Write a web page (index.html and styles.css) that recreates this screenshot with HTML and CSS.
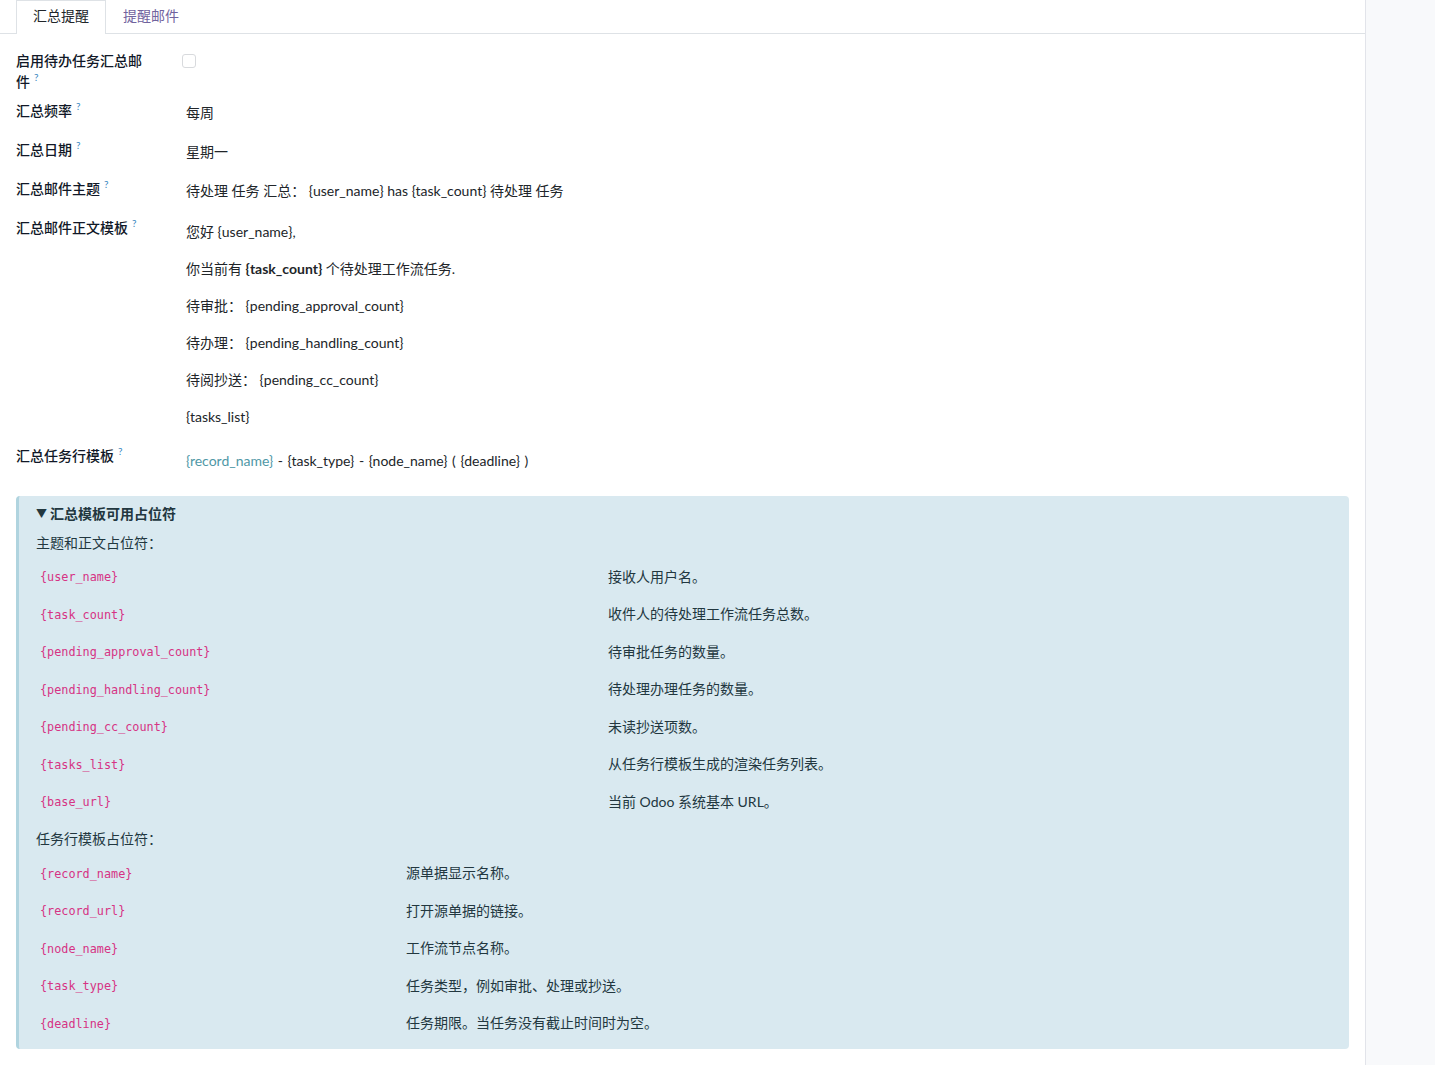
FILE: index.html
```html
<!DOCTYPE html>
<html lang="zh">
<head>
<meta charset="utf-8">
<title>汇总提醒</title>
<link rel="stylesheet" href="styles.css">
</head>
<body>
<div class="app">
  <div class="main">
    <ul class="tabs">
      <li class="tab active">汇总提醒</li>
      <li class="tab">提醒邮件</li>
    </ul>
    <div class="form">
      <div class="row row-first">
        <div class="label">启用待办任务汇总邮件<sup>?</sup></div>
        <div class="value"><span class="checkbox"></span></div>
      </div>
      <div class="row">
        <div class="label">汇总频率<sup>?</sup></div>
        <div class="value">每周</div>
      </div>
      <div class="row">
        <div class="label">汇总日期<sup>?</sup></div>
        <div class="value">星期一</div>
      </div>
      <div class="row">
        <div class="label">汇总邮件主题<sup>?</sup></div>
        <div class="value">待处理 任务 汇总： {user_name} has {task_count} 待处理 任务</div>
      </div>
      <div class="row row-body">
        <div class="label">汇总邮件正文模板<sup>?</sup></div>
        <div class="value body">
          <p>您好 {user_name},</p>
          <p>你当前有 <b>{task_count}</b> 个待处理工作流任务.</p>
          <p>待审批： {pending_approval_count}</p>
          <p>待办理： {pending_handling_count}</p>
          <p>待阅抄送： {pending_cc_count}</p>
          <p>{tasks_list}</p>
        </div>
      </div>
      <div class="row row-line">
        <div class="label">汇总任务行模板<sup>?</sup></div>
        <div class="value line"><span class="faded">{record_name}</span> - {task_type} - {node_name} ( {deadline} )</div>
      </div>

      <div class="alert">
        <div class="summary"><span class="caret">▼</span>汇总模板可用占位符</div>
        <div class="section-title">主题和正文占位符：</div>
        <table class="ph ph-1">
          <tr><td><code>{user_name}</code></td><td>接收人用户名。</td></tr>
          <tr><td><code>{task_count}</code></td><td>收件人的待处理工作流任务总数。</td></tr>
          <tr><td><code>{pending_approval_count}</code></td><td>待审批任务的数量。</td></tr>
          <tr><td><code>{pending_handling_count}</code></td><td>待处理办理任务的数量。</td></tr>
          <tr><td><code>{pending_cc_count}</code></td><td>未读抄送项数。</td></tr>
          <tr><td><code>{tasks_list}</code></td><td>从任务行模板生成的渲染任务列表。</td></tr>
          <tr><td><code>{base_url}</code></td><td>当前 Odoo 系统基本 URL。</td></tr>
        </table>
        <div class="section-title second">任务行模板占位符：</div>
        <table class="ph ph-2">
          <tr><td><code>{record_name}</code></td><td>源单据显示名称。</td></tr>
          <tr><td><code>{record_url}</code></td><td>打开源单据的链接。</td></tr>
          <tr><td><code>{node_name}</code></td><td>工作流节点名称。</td></tr>
          <tr><td><code>{task_type}</code></td><td>任务类型，例如审批、处理或抄送。</td></tr>
          <tr><td><code>{deadline}</code></td><td>任务期限。当任务没有截止时间时为空。</td></tr>
        </table>
      </div>
    </div>
  </div>
  <div class="side"></div>
</div>
</body>
</html>
```

FILE: styles.css
```css
html, body {
  margin: 0;
  padding: 0;
  background: #ffffff;
}
body {
  font-family: "Lato", "Noto Sans CJK SC", sans-serif;
  font-size: 14px;
  line-height: 21px;
  color: #212529;
}
.app {
  display: flex;
  min-height: 1065px;
}
.main {
  width: 1366px;
  border-right: 1px solid #e2e4ea;
  box-sizing: border-box;
}
.side {
  flex: 1;
  background: #f8f9fb;
}
.tabs {
  list-style: none;
  margin: 0;
  padding: 0 0 0 16px;
  display: flex;
  border-bottom: 1px solid #dee2e6;
  height: 33px;
}
.tab {
  height: 33px;
  line-height: 30px;
  padding: 0 16px;
  color: #71639e;
  border: 1px solid transparent;
  border-bottom: none;
  box-sizing: border-box;
}
.tab.active {
  color: #212529;
  border-color: #dee2e6;
  background: #fff;
  height: 34px;
  margin-bottom: -1px;
}
.form {
  padding: 16px;
}
.row {
  display: flex;
  margin-bottom: 16px;
}
.row-first {
  margin-bottom: 8px;
}
.label {
  width: 170px;
  flex: none;
  padding-right: 34px;
  box-sizing: border-box;
  font-weight: 500;
  color: #111827;
}
.label sup {
  font-size: 10px;
  color: #3d88bf;
  margin-left: 4px;
  vertical-align: top;
  line-height: 10px;
  font-weight: 400;
  position: relative;
  top: 1px;
}
.value {
  flex: 1;
  padding-top: 2px;
}
.checkbox {
  display: inline-block;
  vertical-align: top;
  width: 12px;
  height: 12px;
  border: 1px solid #d8dadd;
  border-radius: 3px;
  margin-left: -4px;
  margin-top: 2px;
}
.row-body .value {
  padding-top: 4px;
}
.body p {
  margin: 0 0 16px 0;
}
.body p:last-child {
  margin-bottom: 0;
}
.body b {
  font-weight: 700;
}
.row-line {
  margin-top: 18px;
}
.row-line .value {
  padding-top: 5px;
}
.line {
  word-spacing: 1px;
}
.faded {
  color: #4f98a6;
}
.alert {
  margin-top: 25px;
  background: #d9e9f0;
  border-left: 3px solid #b0d4df;
  border-radius: 4px;
  padding: 7px 16px 7px 17px;
  color: #22373f;
}
.summary {
  font-weight: 700;
  line-height: 21px;
  margin-bottom: 8px;
}
.caret {
  display: inline-block;
  font-size: 11px;
  width: 14px;
  font-weight: 400;
  vertical-align: top;
}
.section-title {
  line-height: 21px;
}
.section-title.second {
  margin-top: 7px;
}
.ph {
  border-collapse: collapse;
  width: 100%;
  margin: 5px 0 0 0;
}
.ph-2 {
  margin-top: 6px;
}
.ph tr {
  height: 37.5px;
}
.ph td {
  padding: 0 4px;
  line-height: 20px;
  vertical-align: middle;
}
.ph-1 td:first-child {
  width: 560px;
}
.ph-2 td:first-child {
  width: 358px;
}
code {
  font-family: "DejaVu Sans Mono", monospace;
  font-size: 11.8px;
  color: #d63384;
}
```
